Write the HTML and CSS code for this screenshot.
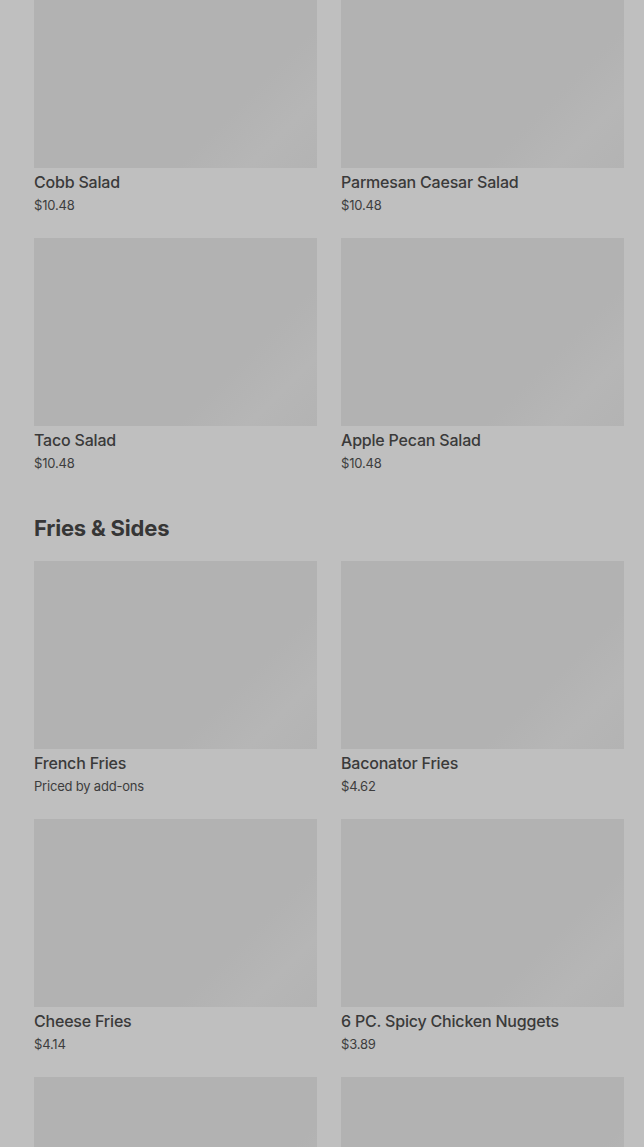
FILE: index.html
```html
<!DOCTYPE html>
<html lang="en">
<head>
<meta charset="utf-8">
<title>Menu</title>
<link rel="stylesheet" href="styles.css">
</head>
<body>
<main class="menu">
  <section class="section section-first">
    <div class="grid">
      <article class="item"><div class="thumb"></div><h3 class="name">Cobb Salad</h3><p class="price">$10.48</p></article>
      <article class="item"><div class="thumb"></div><h3 class="name">Parmesan Caesar Salad</h3><p class="price">$10.48</p></article>
      <article class="item"><div class="thumb"></div><h3 class="name">Taco Salad</h3><p class="price">$10.48</p></article>
      <article class="item"><div class="thumb"></div><h3 class="name">Apple Pecan Salad</h3><p class="price">$10.48</p></article>
    </div>
  </section>
  <section class="section">
    <h2 class="section-title">Fries &amp; Sides</h2>
    <div class="grid">
      <article class="item"><div class="thumb"></div><h3 class="name">French Fries</h3><p class="price">Priced by add-ons</p></article>
      <article class="item"><div class="thumb"></div><h3 class="name">Baconator Fries</h3><p class="price">$4.62</p></article>
      <article class="item"><div class="thumb"></div><h3 class="name">Cheese Fries</h3><p class="price">$4.14</p></article>
      <article class="item"><div class="thumb"></div><h3 class="name">6 PC. Spicy Chicken Nuggets</h3><p class="price">$3.89</p></article>
      <article class="item"><div class="thumb"></div></article>
      <article class="item"><div class="thumb"></div></article>
    </div>
  </section>
</main>
</body>
</html>
```
FILE: styles.css
```css
html, body {
  margin: 0;
  padding: 0;
  background: #bfbfbf;
}
html {
  height: 1147px;
  overflow: hidden;
}
body {
  font-family: Inter, "Noto Sans", sans-serif;
  color: #3a3a3a;
}
.menu {
  padding: 0 20px 0 34px;
  margin-top: -20px;
}
.section-title {
  margin: 42px 0 19px;
  font-size: 22px;
  line-height: 28px;
  font-weight: 700;
  letter-spacing: -0.2px;
  color: #363636;
}
.grid {
  display: grid;
  grid-template-columns: 1fr 1fr;
  column-gap: 24px;
  row-gap: 24px;
}
.item {
  display: flex;
  flex-direction: column;
}
.thumb {
  height: 188px;
  background: linear-gradient(135deg, #b2b2b2 0%, #b2b2b2 70%, #b6b6b6 85%, #b3b3b3 100%);
}
.name {
  margin: 4px 0 0;
  font-size: 16px;
  line-height: 20px;
  font-weight: 500;
  letter-spacing: -0.2px;
  color: #3a3a3a;
}
.price {
  margin: 4px 0 0;
  font-size: 13px;
  line-height: 18px;
  font-weight: 400;
  letter-spacing: -0.2px;
  color: #3d3d3d;
}
```
